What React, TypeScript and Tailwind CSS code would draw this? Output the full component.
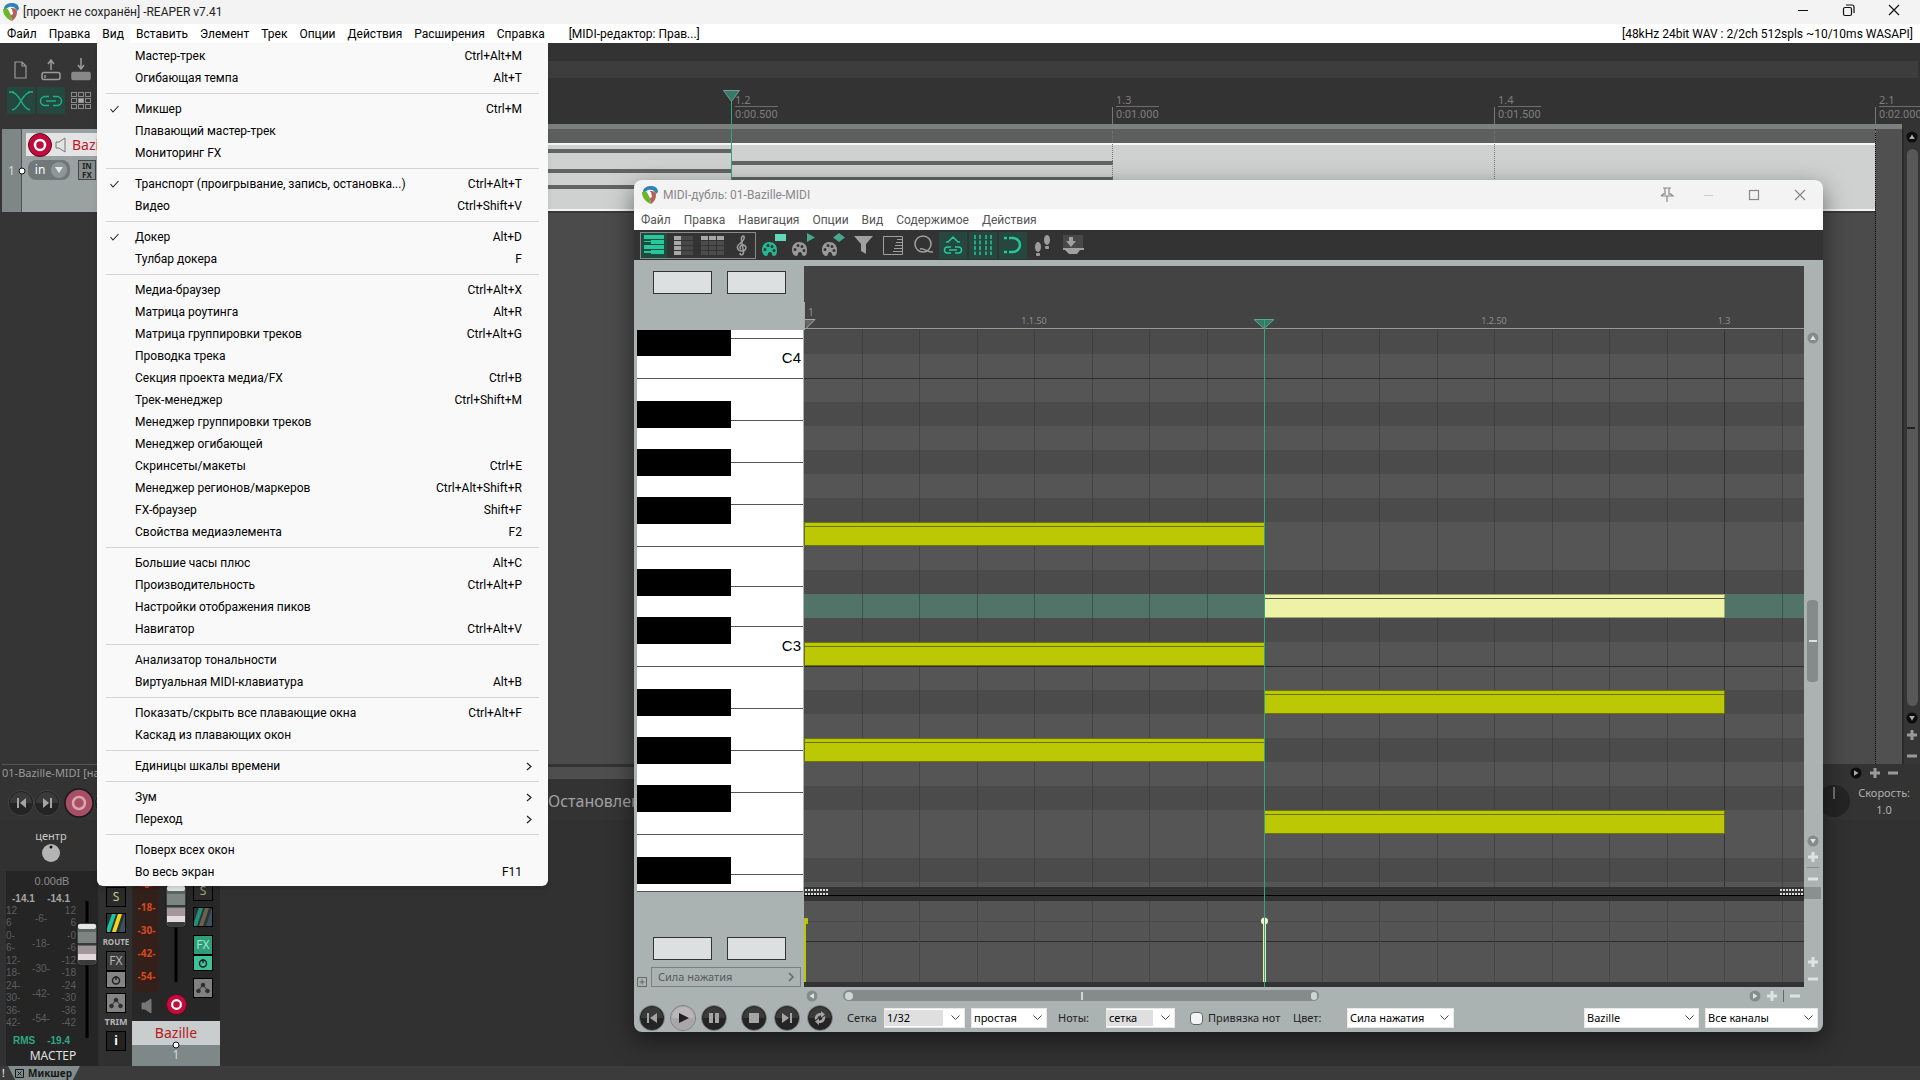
import type { ReactNode } from "react";

interface IMenuItem {
  label: string;
  keys?: string;
  checked?: boolean;
  sub?: boolean;
}

const MAIN_MENU = [
  "Файл",
  "Правка",
  "Вид",
  "Вставить",
  "Элемент",
  "Трек",
  "Опции",
  "Действия",
  "Расширения",
  "Справка"
];

const MIDI_MENU = [
  "Файл",
  "Правка",
  "Навигация",
  "Опции",
  "Вид",
  "Содержимое",
  "Действия"
];

const VIEW_MENU: IMenuItem[][] = [
  [
    { label: "Мастер-трек", keys: "Ctrl+Alt+M" },
    { label: "Огибающая темпа", keys: "Alt+T" }
  ],
  [
    { label: "Микшер", keys: "Ctrl+M", checked: true },
    { label: "Плавающий мастер-трек" },
    { label: "Мониторинг FX" }
  ],
  [
    {
      label: "Транспорт (проигрывание, запись, остановка...)",
      keys: "Ctrl+Alt+T",
      checked: true
    },
    { label: "Видео", keys: "Ctrl+Shift+V" }
  ],
  [
    { label: "Докер", keys: "Alt+D", checked: true },
    { label: "Тулбар докера", keys: "F" }
  ],
  [
    { label: "Медиа-браузер", keys: "Ctrl+Alt+X" },
    { label: "Матрица роутинга", keys: "Alt+R" },
    { label: "Матрица группировки треков", keys: "Ctrl+Alt+G" },
    { label: "Проводка трека" },
    { label: "Секция проекта медиа/FX", keys: "Ctrl+B" },
    { label: "Трек-менеджер", keys: "Ctrl+Shift+M" },
    { label: "Менеджер группировки треков" },
    { label: "Менеджер огибающей" },
    { label: "Скринсеты/макеты", keys: "Ctrl+E" },
    { label: "Менеджер регионов/маркеров", keys: "Ctrl+Alt+Shift+R" },
    { label: "FX-браузер", keys: "Shift+F" },
    { label: "Свойства медиаэлемента", keys: "F2" }
  ],
  [
    { label: "Большие часы плюс", keys: "Alt+C" },
    { label: "Производительность", keys: "Ctrl+Alt+P" },
    { label: "Настройки отображения пиков" },
    { label: "Навигатор", keys: "Ctrl+Alt+V" }
  ],
  [
    { label: "Анализатор тональности" },
    { label: "Виртуальная MIDI-клавиатура", keys: "Alt+B" }
  ],
  [
    { label: "Показать/скрыть все плавающие окна", keys: "Ctrl+Alt+F" },
    { label: "Каскад из плавающих окон" }
  ],
  [{ label: "Единицы шкалы времени", sub: true }],
  [
    { label: "Зум", sub: true },
    { label: "Переход", sub: true }
  ],
  [{ label: "Поверх всех окон" }, { label: "Во весь экран", keys: "F11" }]
];

const Logo = () => (
  <svg width="16" height="18" viewBox="0 0 16 18">
    <path d="M1 5C2 1 6 0 9 0c4 0 7 2 7 6l-2 2C13 4 9 3 6 4L1 7z" fill="#2f83b8" />
    <path d="M0 6l6-1 3 13C4 16 0 12 0 6z" fill="#6db52d" />
    <path d="M8 5c4 0 6 1 6 4 0 4-2 7-5 9L7 9z" fill="#b4605c" />
    <path d="M4 5l5 1 1 5-2 1-2-4z" fill="#fff" />
  </svg>
);

/* ---------- view menu ---------- */

const ViewMenu = () => (
  <div
    role="menu"
    className="absolute left-[97px] top-[43px] z-20 w-[451px] rounded-b-md bg-[#f9f9f9] px-[9px] pb-[3px] pt-0.5 font-['Roboto',sans-serif] text-[12px] text-black shadow-md"
  >
    {VIEW_MENU.map((group, i) => (
      <div key={i}>
        {i > 0 && <div className="my-1 h-px bg-[#d4d4d4]" />}
        {group.map((item) => (
          <button
            key={item.label}
            role="menuitem"
            className="flex h-[22px] w-full items-center whitespace-nowrap text-left"
          >
            <span className="flex w-[29px] shrink-0 pl-1">
              {item.checked && (
                <svg width="9" height="8" fill="none" stroke="#222" strokeWidth="1.1">
                  <path d="M.5 4l2.500 3L8.500 1" />
                </svg>
              )}
            </span>
            <span className="grow">{item.label}</span>
            <span>{item.keys}</span>
            <span className="flex w-[17px] shrink-0 pl-1">
              {item.sub && (
                <svg width="6" height="9" fill="none" stroke="#222" strokeWidth="1.2">
                  <path d="M1 1l4 3.500-4 3.500" />
                </svg>
              )}
            </span>
          </button>
        ))}
      </div>
    ))}
  </div>
);

/* ---------- small shared parts ---------- */

const RoundArrow = ({ dir, light }: { dir: number; light?: boolean }) => (
  <svg width="12" height="12" viewBox="0 0 12 12" className="shrink-0">
    <circle cx="6" cy="6" r="5.500" fill={light ? "#848b8b" : "#0d0d0d"} />
    <path
      d="M6 3.500L8.800 8H3.200z"
      fill={light ? "#dfe4e4" : "#aaa"}
      transform={`rotate(${dir} 6 6)`}
    />
  </svg>
);

const Plus = ({ light }: { light?: boolean }) => (
  <svg width="10" height="10" className="shrink-0" fill={light ? "#dde2e2" : "#9a9a9a"}>
    <path d="M3.500 0h3v3.500H10v3H6.500V10h-3V6.500H0v-3h3.500z" />
  </svg>
);

const Minus = ({ light }: { light?: boolean }) => (
  <svg width="10" height="4" className="shrink-0" fill={light ? "#dde2e2" : "#9a9a9a"}>
    <path d="M0 .5h10v3H0z" />
  </svg>
);

const RecordDot = ({ size }: { size: number }) => (
  <svg width={size} height={size} viewBox="0 0 24 24" className="shrink-0">
    <circle cx="12" cy="12" r="11.500" fill="#c40c3c" stroke="#5b0a20" />
    <circle cx="12" cy="12" r="5" fill="none" stroke="#fff" strokeWidth="2.500" />
  </svg>
);

const Speaker = ({ filled }: { filled?: boolean }) => (
  <svg
    width="12"
    height="16"
    viewBox="0 0 12 16"
    className="shrink-0"
    fill={filled ? "#777" : "none"}
    stroke="#777"
  >
    <path d="M1 5h3l6-4v14l-6-4H1z" />
  </svg>
);

/* ---------- arrange view ---------- */

const ToolCell = ({ active, children }: { active?: boolean; children: ReactNode }) => (
  <button
    className={`flex h-[27px] w-7 items-center justify-center ${active ? "bg-[#25483e]" : ""}`}
  >
    {children}
  </button>
);

const TrackPanel = () => (
  <div className="flex w-[548px] shrink-0 flex-col bg-[#353535]">
    <div className="grid grid-cols-[28px_28px_28px] gap-x-0.5 gap-y-1 pb-[15px] pl-[7px] pt-[13px]">
      <ToolCell>
        <svg width="14" height="18" fill="none" stroke="#9a9a9a" strokeWidth="1.2">
          <path d="M1 1h7l4 4v12H1zM8 1v4h4" />
        </svg>
      </ToolCell>
      <ToolCell>
        <svg width="20" height="23" fill="none" stroke="#9a9a9a" strokeWidth="1.500">
          <path d="M10 12V2M7 6l3-4 3 4" />
          <rect x="1" y="14.500" width="18" height="7" rx="2" />
          <path d="M4 17v3" />
        </svg>
      </ToolCell>
      <ToolCell>
        <svg width="20" height="23" fill="none" stroke="#9a9a9a" strokeWidth="1.500">
          <path d="M10 0v10M7 7l3 4 3-4" />
          <rect x="1" y="14.500" width="18" height="7" rx="1" fill="#888" stroke="#888" />
        </svg>
      </ToolCell>
      <ToolCell active>
        <svg width="24" height="20" fill="none" stroke="#1fae88" strokeWidth="1.500">
          <path d="M0 1h5M19 1h5M3 1C12 3 12 17 21 19M21 1C12 3 12 17 3 19" />
        </svg>
      </ToolCell>
      <ToolCell active>
        <svg width="24" height="12" fill="none" stroke="#1fae88" strokeWidth="1.500">
          <path d="M10 1.500H6a4.500 4.500 0 000 9h4M14 10.500h4a4.500 4.500 0 000-9h-4M7 6h10" />
        </svg>
      </ToolCell>
      <ToolCell>
        <svg width="20" height="18" fill="none" stroke="#8a8a8a">
          {[0, 7, 14].map((x) =>
            [0, 6, 12].map((y) => (
              <rect
                key={`${x}-${y}`}
                x={x + 0.5}
                y={y + 0.5}
                width="5"
                height="4"
                fill={x === 7 && y === 6 ? "#aaa" : "none"}
              />
            ))
          )}
        </svg>
      </ToolCell>
    </div>
    <div className="ml-0.5 flex h-[83px] bg-[#9aa1a1] text-white">
      <div className="flex w-5 flex-col items-center justify-center border-r border-[#4d5353] bg-[#7f8686] text-[12px] text-[#d8dcdc]">
        <span>1</span>
      </div>
      <svg width="8" height="8" className="-ml-1 self-center">
        <circle cx="4" cy="4" r="3" fill="#fff" stroke="#111" />
      </svg>
      <div className="flex grow flex-col pt-1">
        <div className="flex h-[23px] items-center gap-[3px] bg-[#e3e5e5] pl-0.5">
          <RecordDot size={24} />
          <Speaker />
          <span className="w-7 overflow-hidden pl-0.5 text-[14px] text-[#c01828]">Bazi</span>
        </div>
        <div className="flex items-center gap-2 pl-0.5 pt-1">
          <button className="flex h-5 w-[42px] items-center justify-around rounded-lg bg-[#70787a] pl-1 text-[12px]">
            in
            <svg width="16" height="16">
              <circle cx="8" cy="8" r="8" fill="#8f9696" />
              <path d="M4 5h8l-4 6z" fill="#e8e8e8" />
            </svg>
          </button>
          <button className="w-[18px] border border-[#444] bg-[#868d8d] text-[8px] font-bold leading-[9px] text-[#222]">
            IN
            <br />
            FX
          </button>
        </div>
      </div>
    </div>
  </div>
);

const RULER_MARKS = [
  { x: 564, bar: "1.3", time: "0:01.000" },
  { x: 946, bar: "1.4", time: "0:01.500" },
  { x: 1327, bar: "2.1", time: "0:02.000" }
];

/* time ruler, item and its note preview */
const Arrange = () => (
  <div className="relative z-10 flex min-w-0 grow flex-col">
    <div className="-mr-4 mt-[18px] h-[17px] bg-[#3d3d3d]" />
    <div className="mt-[46px] h-[5px] bg-[#7d807f]" />
    <div className="flex grow overflow-hidden">
      <div className="w-[1327px] shrink-0 bg-[#4b4b4b]">
        <div className="h-3.5 bg-[#5d5f5f]" />
        <svg width="1327" height="68" className="block">
          <rect width="1327" height="68" fill="#ced1d0" />
          <path d="M0 1h1327M0 67h1327" stroke="#f4f4f4" strokeWidth="2" />
          <path d="M0 8h183M0 28h183M0 44h183M183 20h382M183 36h382" stroke="#626464" strokeWidth="4" />
        </svg>
        <div className="h-0.5 bg-[#3a3a3a]" />
      </div>
      <div className="grow border-l border-dotted border-black bg-[#505050]" />
    </div>
    {RULER_MARKS.map((m) => (
      <div
        key={m.bar}
        className="absolute top-[50px] h-[110px]"
        style={{ left: m.x }}
      >
        <div className="absolute top-3.5 h-[17px] w-px bg-[#777]" />
        <div className="absolute top-[38px] h-[70px] border-l border-dotted border-[#777]" />
        <div className="pl-1 text-[11px] leading-[14px] text-[#7e7e7e]">
          <div className="h-3.5 border-b border-[#6e6e6e]">{m.bar}</div>
          <div className="pt-px font-['Roboto',sans-serif]">{m.time}</div>
        </div>
      </div>
    ))}
    <div className="absolute left-[183px] top-[50px] h-[110px] border-l border-[#2fa584]">
      <svg width="17" height="12" className="absolute -left-[9px] -top-[3px]">
        <path d="M.5.500h16l-8 11z" fill="#337a68" stroke="#8aa" strokeWidth=".8" />
      </svg>
      <div className="pl-[3px] text-[11px] leading-[14px] text-[#7e7e7e]">
        <div className="h-3.5 border-b border-[#6e6e6e]">1.2</div>
        <div className="pt-px font-['Roboto',sans-serif]">0:00.500</div>
      </div>
    </div>
  </div>
);

const ArrangeScroll = () => (
  <div className="mt-[86px] flex w-[18px] shrink-0 flex-col items-center border-l-2 border-[#2a2a2a] bg-[#353535] pb-1.5 pt-0.5">
    <RoundArrow dir={0} />
    <div className="my-1.5 flex w-[11px] grow items-center rounded-full bg-[#585858]">
      <div className="h-0.5 w-2 bg-[#222]" />
    </div>
    <RoundArrow dir={180} />
    <div className="h-1.5 shrink-0" />
    <Plus />
    <div className="h-3.5 shrink-0" />
    <Minus />
  </div>
);

/* ---------- transport and mixer ---------- */

const Transport = () => (
  <div className="flex h-14 shrink-0 bg-[#333]">
    <div className="flex w-[548px] shrink-0 flex-col pl-0.5">
      <div className="h-[17px] border-t border-[#555] text-[11px] leading-[16px] text-[#999]">
        01-Bazille-MIDI [нач
      </div>
      <div className="flex items-center pl-1.5 pt-[7px]">
        <RoundButton dark>
          <path d="M8 7h2v10H8zM17 7v10l-6-5z" />
        </RoundButton>
        <RoundButton dark>
          <path d="M15 7h2v10h-2zM8 7v10l6-5z" />
        </RoundButton>
        <svg width="30" height="30" className="ml-1">
          <circle cx="15" cy="15" r="14" fill="#a84f65" stroke="#1a1a1a" strokeWidth="1.500" />
          <circle cx="15" cy="15" r="6" fill="none" stroke="#d9a5b0" strokeWidth="2.500" />
        </svg>
        <RoundButton dark>
          <path d="M8 7l9 5-9 5z" />
        </RoundButton>
      </div>
    </div>
    <div className="flex grow flex-col pt-px">
      <div className="flex h-4 shrink-0 items-center justify-end pr-[22px]">
        <div className="mr-20 h-3 grow bg-[#4e4e4e]" />
        <div className="flex items-center gap-2">
          <RoundArrow dir={90} />
          <Plus />
          <Minus />
        </div>
      </div>
      <div className="flex grow items-center justify-between">
        <span className="text-[16px] text-[#a2a2a2]">Остановлено.</span>
        <div className="flex items-center gap-2 pr-2.5">
          <svg width="32" height="32">
            <circle cx="16" cy="16" r="16" fill="#242424" />
            <path d="M16 2v12" stroke="#bbb" />
          </svg>
          <div className="text-center text-[11px] leading-[17px] text-[#b0b0b0]">
            Скорость:
            <br />
            1.0
          </div>
        </div>
      </div>
    </div>
  </div>
);

const RoundButton = ({
  children,
  dark,
  bright
}: {
  children: ReactNode;
  dark?: boolean;
  bright?: boolean;
}) => (
  <button className={`rounded-full border ${dark ? "border-[#444]" : "border-[#777d7d]"}`}>
    <svg width="24" height="24" fill={bright ? "#222" : "#a4a4a4"}>
      <circle cx="12" cy="12" r="12" fill={bright ? "#aaa5a8" : "#242424"} />
      <path d="M1 12a11 11 0 0122 0z" fill={bright ? "#bbb6b9" : "#3a3a3a"} />
      {children}
    </svg>
  </button>
);

const Fader = ({ height, cap }: { height: number; cap: number }) => (
  <svg width="22" height={height} className="shrink-0">
    <path d={`M11 0V${height}`} stroke="#000" strokeWidth="3" />
    <rect x="1" y={cap} width="20" height="42" rx="3" fill="#5f6765" stroke="#1b1b1b" />
    <rect x="2" y={cap + 1} width="18" height="5" rx="2" fill="#e4e6e6" />
    <rect x="2" y={cap + 9} width="18" height="11" fill="#7d8583" />
    <path d={`M1 ${cap + 21}h20`} stroke="#111" />
    <rect x="2" y={cap + 23} width="18" height="8" fill="#a3979c" />
    <rect x="2" y={cap + 31} width="18" height="6" fill="#e2dadd" />
    <rect x="2" y={cap + 37} width="18" height="4" rx="2" fill="#3a3a3a" />
  </svg>
);

const MixButton = ({ cls, children }: { cls: string; children: ReactNode }) => (
  <button
    className={`flex w-5 shrink-0 items-center justify-center border border-black text-[12px] leading-none ${cls}`}
  >
    {children}
  </button>
);

const RouteIcon = ({ dim }: { dim?: boolean }) => (
  <svg width="18" height="18">
    <rect width="18" height="18" fill="#2c3438" />
    <path d="M0 14L5 0h4L3 18H0z" fill={dim ? "#1e9278" : "#18c5a0"} />
    <path d="M5 18l6-18h4L9 18z" fill={dim ? "#6b6248" : "#f4d51c"} />
    <path d="M12 18l6-18v18z" fill="#3c5260" />
  </svg>
);

const EnvIcon = () => (
  <svg width="14" height="12" fill="#2e2e2e" stroke="#2e2e2e">
    <path d="M2 9l5-6 5 6" fill="none" />
    <circle cx="2.500" cy="9" r="1.800" />
    <circle cx="7" cy="3" r="1.800" />
    <circle cx="11.500" cy="9" r="1.800" />
  </svg>
);

const PowerIcon = () => (
  <svg width="10" height="10" fill="none" stroke="#222" strokeWidth="1.500">
    <circle cx="5" cy="5.500" r="3.500" />
    <path d="M5 1v4" />
  </svg>
);

const DbColumn = ({ marks, cls }: { marks: string[]; cls: string }) => (
  <div className={`flex flex-col justify-between text-[10px] leading-3 ${cls}`}>
    {marks.map((m, i) => (
      <span key={i}>{m}</span>
    ))}
  </div>
);

const LEFT_DB = ["12", "6", "0-", "6-", "12-", "18-", "24-", "30-", "36-", "42-"];
const RIGHT_DB = ["12", "6", "-0", "-6", "-12", "-18", "-24", "-30", "-36", "-42"];

const Master = () => (
  <div className="flex w-[98px] shrink-0 flex-col pt-2">
    <div className="flex h-[43px] flex-col items-center pl-1">
      <span className="text-[11px] leading-4 text-[#c8c8c8]">центр</span>
      <svg width="18" height="18">
        <circle cx="9" cy="9" r="9" fill="#b4b4b4" />
        <circle cx="9" cy="3" r="1.500" fill="#111" />
      </svg>
    </div>
    <div className="ml-1.5 flex grow flex-col bg-[#252525] pt-0.5 font-['Liberation_Sans',sans-serif]">
      <div className="text-center text-[11px] leading-4 text-[#8c8c8c]">0.00dB</div>
      <div className="flex">
        <div className="w-[71px] pt-1">
          <div className="flex justify-between pl-1.5 pr-1.5 text-[10px] font-bold leading-3 text-[#a5a5a5]">
            <span>-14.1</span>
            <span>-14.1</span>
          </div>
          <div className="flex h-[124px] justify-between text-[#5e5e5e]">
            <DbColumn marks={LEFT_DB} cls="items-start" />
            <DbColumn
              marks={["-6-", "-18-", "-30-", "-42-", "-54-"]}
              cls="items-center pb-1 pt-2"
            />
            <DbColumn marks={RIGHT_DB} cls="items-end" />
          </div>
          <div className="flex justify-between pl-[7px] pr-1.5 pt-1.5 text-[10px] font-bold leading-3 text-[#2fa584]">
            <span>RMS</span>
            <span>-19.4</span>
          </div>
        </div>
        <div className="pt-3">
          <Fader height={137} cap={22} />
        </div>
      </div>
      <div className="pl-0.5 text-center font-['Noto_Sans',sans-serif] text-[12px] leading-[18px] text-[#e0e0e0]">
        МАСТЕР
      </div>
    </div>
  </div>
);

const MasterButtons = () => (
  <div className="flex w-[34px] shrink-0 flex-col items-center bg-[#303030] pl-0.5 pt-[67px] text-[#b5b5b5]">
    <MixButton cls="h-5 bg-[#2b2b2b] text-[#c3d08a]">S</MixButton>
    <div className="h-1.5 shrink-0" />
    <MixButton cls="h-5">
      <RouteIcon />
    </MixButton>
    <span className="h-[18px] text-[8px] font-bold leading-[17px]">ROUTE</span>
    <MixButton cls="h-5 bg-[#3c3c3c]">FX</MixButton>
    <MixButton cls="h-[17px] bg-[#858585]">
      <PowerIcon />
    </MixButton>
    <div className="h-[5px] shrink-0" />
    <MixButton cls="h-5 bg-[#858585]">
      <EnvIcon />
    </MixButton>
    <span className="h-[18px] text-[9px] font-bold leading-[17px]">TRIM</span>
    <MixButton cls="h-5 bg-[#222] font-bold text-white">i</MixButton>
  </div>
);

const TrackStrip = () => (
  <div className="flex w-[88px] shrink-0 flex-col">
    <div className="flex h-[201px] bg-[#272727] pl-0.5">
      <div className="flex w-[25px] flex-col items-center">
        <div className="flex h-[172px] w-full flex-col bg-[#33201a] pt-[58px]">
          <DbColumn
            marks={["-6-", "-18-", "-30-", "-42-", "-54-"]}
            cls="h-[104px] items-center font-bold text-[#d84a1c]"
          />
        </div>
        <div className="pt-1.5">
          <Speaker filled />
        </div>
      </div>
      <div className="flex grow flex-col items-center">
        <Fader height={162} cap={65} />
        <div className="pt-3">
          <RecordDot size={21} />
        </div>
      </div>
      <div className="flex w-[27px] flex-col pt-[61px]">
        <MixButton cls="h-5 bg-[#2b2b2b] text-[#a0a87a]">S</MixButton>
        <div className="h-1.5" />
        <MixButton cls="h-5">
          <RouteIcon dim />
        </MixButton>
        <div className="h-2" />
        <MixButton cls="h-5 border-[#24705a] bg-[#2f9c7a] text-[#9fe5cd]">FX</MixButton>
        <MixButton cls="h-4 border-[#24705a] bg-[#3dc39b]">
          <PowerIcon />
        </MixButton>
        <div className="h-[7px]" />
        <MixButton cls="h-5 bg-[#808080]">
          <EnvIcon />
        </MixButton>
      </div>
    </div>
    <div className="h-6 bg-[#c9cdcd] text-center text-[14px] leading-6 text-[#b51820]">
      Bazille
    </div>
    <div className="relative grow bg-[#7e8888] pt-1 text-center text-[12px] leading-3 text-[#d5d9d9]">
      <svg width="8" height="8" className="absolute -top-1 left-10">
        <circle cx="4" cy="4" r="3" fill="#fff" stroke="#111" />
      </svg>
      1
    </div>
  </div>
);

/* ---------- MIDI editor ---------- */

const ROW = 24;
const BEAT = 460;
const BLACK_ROWS = [0, 3, 5, 7, 10, 12, 15, 17, 19, 22];
const NOTES = [
  { row: 8, start: 0 },
  { row: 13, start: 0 },
  { row: 17, start: 0 },
  { row: 11, start: 1, selected: true },
  { row: 15, start: 1 },
  { row: 20, start: 1 }
];

const Keyboard = () => (
  <svg width="166" height="562" className="block">
    <rect width="166" height="562" fill="#fff" />
    <path
      d="M0 48.500h166M0 216.500h166M0 336.500h166M0 504.500h166M0 561.500h166M94 8.500h72M94 90.500h72M94 132.500h72M94 174.500h72M94 256.500h72M94 296.500h72M94 378.500h72M94 420.500h72M94 462.500h72M94 544.500h72"
      stroke="#555"
    />
    {BLACK_ROWS.map((r) => (
      <rect key={r} y={r * ROW - (r ? 1 : 0)} width="94" height={r ? 27 : 26} />
    ))}
    <g fontFamily="Liberation Sans, sans-serif" fontSize="15" textAnchor="end">
      <text x="164" y="33">C4</text>
      <text x="164" y="321">C3</text>
    </g>
  </svg>
);

const PianoRoll = () => (
  <svg width="100%" height="557" className="block">
    <rect width="100%" height="557" fill="#555" />
    {BLACK_ROWS.map((r) => (
      <rect key={r} y={r * ROW} width="100%" height={ROW} fill="#4b4b4b" />
    ))}
    <rect y={11 * ROW} width="100%" height={ROW} fill="#517368" />
    {Array.from({ length: 17 }, (_, i) => (
      <rect
        key={i}
        x={Math.round(((i + 1) * BEAT) / 8)}
        width="1"
        height="557"
        fill={i === 15 ? "#2c2c2c" : "#333"}
        opacity={i === 15 ? 0.8 : 0.5}
      />
    ))}
    <rect y="48" width="100%" height="1" fill="#2c2c2c" />
    <rect y="336" width="100%" height="1" fill="#2c2c2c" />
    {NOTES.map((n) => (
      <g key={n.row} transform={`translate(${n.start * BEAT} ${n.row * ROW})`}>
        <rect
          x=".5"
          y=".5"
          width={BEAT}
          height={ROW - 1}
          fill={n.selected ? "#edf2a6" : "#bcc804"}
          stroke={n.selected ? "#a3a868" : "#6b7210"}
        />
        <path d={`M1 4.500h${BEAT}`} stroke={n.selected ? "#565a3a" : "#6b7210"} />
      </g>
    ))}
  </svg>
);

const Lane = () => (
  <svg width="100%" height="81" className="block">
    <rect width="100%" height="81" fill="#545454" />
    <rect y="20" width="100%" height="1" fill="#4a4a4a" />
    <rect y="40" width="100%" height="1" fill="#2c2c2c" />
    {Array.from({ length: 17 }, (_, i) => (
      <rect key={i} x={Math.round(((i + 1) * BEAT) / 8)} width="1" height="81" fill="#464646" />
    ))}
    <rect y="17" width="4" height="6" rx="1" fill="#bcc804" />
    <rect y="20" width="2" height="61" fill="#bcc804" />
    <rect x="459" y="18" width="3" height="63" fill="#dff0a8" />
    <circle cx="460.500" cy="20" r="3.500" fill="#edf8d0" />
  </svg>
);

const Grip = () => (
  <svg width="23" height="6">
    <path
      d="M0 1h23M0 5h23"
      stroke="#ddd"
      strokeWidth="2"
      strokeDasharray="2 1"
    />
  </svg>
);

const Palette = ({ color, badge }: { color: string; badge: ReactNode }) => (
  <svg width="24" height="24">
    <path
      fillRule="evenodd"
      fill={color}
      d="M7 9c5 0 8 3 8 8 0 4-1 6-3 6-3 0-1-4-4-4s-1 4-4 4c-2 0-4-3-4-6 0-5 3-8 7-8zM6 11a1.500 1.500 0 100 3 1.500 1.500 0 000-3zm4 1a1.500 1.500 0 100 3 1.500 1.500 0 000-3zm-7 3a1.500 1.500 0 100 3 1.500 1.500 0 000-3zm9 1a1.500 1.500 0 100 3 1.500 1.500 0 000-3z"
    />
    {badge}
  </svg>
);

const MidiTool = ({ active, children }: { active?: boolean; children: ReactNode }) => (
  <button
    className={`flex h-[27px] w-7 items-center justify-center ${active ? "bg-[#26473e]" : ""}`}
  >
    {children}
  </button>
);

const MidiToolbar = () => (
  <div className="flex h-[30px] items-center bg-[#333] pl-1.5">
    <div className="mr-[3px] flex h-[27px] items-center border border-[#8a8a8a]">
      <button className="flex h-[25px] w-[26px] items-center justify-center bg-[#1d4b3f]">
        <svg width="20" height="20" fill="#25c79d">
          <path d="M0 0h20v4H0zM0 6h7v1H0zM7 5h13v4H7zM0 10h20v4H0zM7 15h13v4H7zM0 16h7v2H0z" />
        </svg>
      </button>
      <button className="flex w-7 items-center justify-center">
        <svg width="24" height="19">
          <path d="M5 0h7v4H5zM5 5h7v4H5zM5 10h7v4H5zM5 15h7v4H5z" fill="#a8a8a8" />
          <path d="M12 0h12v4H12zM12 5h12v4H12zM12 10h12v4H12zM12 15h12v4H12z" fill="#484848" />
        </svg>
      </button>
      <button className="flex w-[34px] items-center justify-center">
        <svg width="23" height="19">
          <path d="M0 0h7v4H0zM8 0h7v4H8zM16 0h7v4h-7z" fill="#a8a8a8" />
          <path
            d="M0 5h7v4H0zM8 5h7v4H8zM16 5h7v4h-7zM0 10h7v4H0zM8 10h7v4H8zM16 10h7v4h-7zM0 15h7v4H0zM8 15h7v4H8zM16 15h7v4h-7z"
            fill="#4c4c4c"
          />
        </svg>
      </button>
      <button className="flex w-[26px] items-center justify-center">
        <svg width="12" height="21" fill="none" stroke="#a0a0a0" strokeWidth="1.500">
          <path d="M4 18c0 3 4 2 3.500-1L5.500 5C5 2 7 0 8 1.500 9 4 7 6 4 8.500-1 12 2 16 6 16s6-5 1-6c-3-.5-4 3-2 4" />
        </svg>
      </button>
    </div>
    <div className="flex w-[30px] justify-center">
      <Palette color="#23b892" badge={<path d="M13 1h11v7H13z" fill="#62d8b8" />} />
    </div>
    <div className="flex w-[30px] justify-center">
      <Palette color="#9a9a9a" badge={<path d="M15 0l8 4.500L15 9z" fill="#48a88c" />} />
    </div>
    <div className="flex w-[30px] justify-center">
      <Palette color="#9a9a9a" badge={<path d="M11 4.500L17 0l6 4.500L17 9z" fill="#48a88c" />} />
    </div>
    <div className="flex gap-0.5">
      <MidiTool>
        <svg width="19" height="18" fill="#a0a0a0">
          <path d="M0 0h19l-7 8v10l-5-3V8z" />
        </svg>
      </MidiTool>
      <MidiTool>
        <svg width="20" height="19" fill="none" stroke="#a0a0a0">
          <path d="M.5.500h19v18H.5zM14 3.500h5M13 6.500h6M12 9.500h7M11 12.500h8M10 15.500h9" />
        </svg>
      </MidiTool>
      <MidiTool>
        <svg width="21" height="20" fill="none" stroke="#a0a0a0" strokeWidth="1.500">
          <circle cx="10" cy="9" r="8" />
          <path d="M7 14c4-2 7 4 13 3" />
        </svg>
      </MidiTool>
      <MidiTool active>
        <svg width="20" height="20" fill="none" stroke="#25c79d" strokeWidth="1.500">
          <path d="M3 7h2l5-5 5 5h2M8 12H4.500a3 3 0 000 6H8M12 12h3.500a3 3 0 010 6H12M6 15h8" />
        </svg>
      </MidiTool>
      <MidiTool active>
        <svg width="20" height="20" stroke="#25c79d" strokeWidth="1.500" strokeDasharray="4 1.500">
          <path d="M2 0v20M7 0v20M13 0v20M18 0v20" />
        </svg>
      </MidiTool>
      <MidiTool active>
        <svg width="18" height="18" fill="none" stroke="#25c79d" strokeWidth="2.500">
          <path d="M5 2h4a6.500 6.500 0 010 14H5M0 2h3M0 16h3" />
        </svg>
      </MidiTool>
      <MidiTool>
        <svg width="18" height="21" fill="#9c9c9c">
          <ellipse cx="4" cy="12" rx="3" ry="5" />
          <rect x="2" y="18" width="4" height="3" rx="1" />
          <ellipse cx="13" cy="5" rx="3" ry="5" />
          <rect x="11" y="11" width="4" height="3" rx="1" />
        </svg>
      </MidiTool>
      <MidiTool>
        <svg width="21" height="20">
          <path d="M0 0h20v13H0z" fill="#484848" />
          <path d="M0 13h21v2h-4l-3 4H6l-4-4H0z" fill="#a0a0a0" />
          <path d="M6 2h4v4h3l-5 6-5-6h3z" fill="#a0a0a0" />
        </svg>
      </MidiTool>
    </div>
  </div>
);

const BlankBoxes = () => (
  <div className="flex gap-[15px] pl-4">
    <input aria-label="Нота" className="h-[23px] w-[59px] border border-[#333] bg-[#dde0e0]" />
    <input aria-label="Значение" className="h-[23px] w-[59px] border border-[#333] bg-[#dde0e0]" />
  </div>
);

const Combo = ({
  id,
  value,
  cls,
  editable
}: {
  id: string;
  value: string;
  cls: string;
  editable?: boolean;
}) => (
  <div className={`flex h-5 items-center border border-[#e8e8e8] bg-white pr-1 ${cls}`}>
    <select
      id={id}
      aria-label={id}
      className={`min-w-0 grow appearance-none pl-0.5 text-[11px] leading-4 text-black ${editable ? "mr-2 bg-[#dfdfdf]" : ""}`}
    >
      <option>{value}</option>
    </select>
    <svg width="9" height="6" fill="none" stroke="#444" className="shrink-0">
      <path d="M.5.500l4 4 4-4" />
    </svg>
  </div>
);

const MidiEditor = () => (
  <div className="absolute left-[634px] top-[180px] z-20 flex w-[1189px] flex-col overflow-hidden rounded-lg bg-[#abb2b2] shadow-[0_8px_24px_rgba(0,0,0,0.5)]">
    <div className="flex h-[29px] items-center bg-[#f3f3f3] pl-2 pr-[17px] font-['Roboto',sans-serif] text-[12px] text-[#888]">
      <Logo />
      <span className="grow pl-[5px]">MIDI-дубль: 01-Bazille-MIDI</span>
      <svg width="146" height="18" fill="none" stroke="#888" strokeWidth="1.200">
        <path d="M3 2h8M5 2v7M9 2v7M1 10h12l-3-2.500M1 10l3-2.500M7 10v6" />
        <path d="M44 9.500h9" stroke="#ccc" />
        <rect x="89.500" y="4.500" width="9" height="9" />
        <path d="M135 4l10 10M145 4l-10 10" />
      </svg>
    </div>
    <div className="flex h-[21px] items-center gap-px bg-white pl-px font-['Roboto',sans-serif] text-[12px] text-[#555]">
      {MIDI_MENU.map((m) => (
        <button key={m} className="px-1.5">
          {m}
        </button>
      ))}
    </div>
    <MidiToolbar />
    <div className="flex">
      <div className="w-[170px] shrink-0 pl-[3px]">
        <div className="h-[70px] pt-[11px]">
          <BlankBoxes />
        </div>
        <Keyboard />
        <div className="pt-[45px]">
          <BlankBoxes />
        </div>
        <div className="flex items-end gap-1 pt-[7px]">
          <svg width="10" height="10" fill="none" stroke="#666">
            <path d="M.5.500h9v9h-9zM5 2.500v5M2.500 5h5" />
          </svg>
          <button className="flex h-5 w-[150px] items-center justify-between border border-[#7a8080] px-1.5 text-[11px] text-[#555c5c]">
            Сила нажатия
            <svg width="6" height="10" fill="none" stroke="#666" strokeWidth="1.500">
              <path d="M1 1l4 4-4 4" />
            </svg>
          </button>
        </div>
      </div>
      <div className="relative min-w-0 grow pt-1.5">
        <svg width="100%" height="64" className="block bg-[#434343]">
          <rect y="62" width="100%" height="1" fill="#999" />
          <rect y="36" width="1" height="28" fill="#aaa" />
          <path d="M1 53.500h10l-9 9" fill="#666" stroke="#aaa" />
          <path d="M450 53.500h20l-10 9z" fill="#337a68" stroke="#5ba995" />
          <g fill="#8d8d8d" fontSize="9" textAnchor="middle">
            <text x="7" y="50" fontSize="11">1</text>
            <text x="230" y="58">1.1.50</text>
            <text x="690" y="58">1.2.50</text>
            <text x="920" y="58">1.3</text>
          </g>
        </svg>
        <PianoRoll />
        <div className="h-2 bg-[#333] px-px pt-0.5">
          <div className="flex justify-between">
            <Grip />
            <Grip />
          </div>
        </div>
        <div className="h-1.5 border-t border-black bg-[#333]" />
        <Lane />
        <div className="h-[5px] bg-[#333]" />
        <div className="absolute bottom-0 left-[460px] top-[60px] w-px bg-[#2fa584]" />
      </div>
      <div className="flex w-[19px] shrink-0 flex-col items-center pb-1.5 pr-0.5 pt-[72px]">
        <RoundArrow dir={0} light />
        <div className="h-[256px]" />
        <div className="flex h-[82px] w-[11px] items-center justify-center rounded bg-[#858b8b]">
          <div className="h-0.5 w-2 bg-[#dde2e2]" />
        </div>
        <div className="h-[153px]" />
        <RoundArrow dir={180} light />
        <div className="h-[5px]" />
        <Plus light />
        <div className="my-[5px] h-px w-3 bg-[#848b8b]" />
        <div className="h-1" />
        <Minus light />
        <div className="mt-1.5 h-3 w-full bg-[#8a9090]" />
        <div className="grow" />
        <Plus light />
        <div className="h-2.5" />
        <Minus light />
      </div>
    </div>
    <div className="flex h-[17px] items-center pl-[172px] pr-[23px]">
      <RoundArrow dir={-90} light />
      <div className="ml-[25px] flex h-[11px] w-[476px] items-center justify-between rounded-full bg-[#858b8b] px-0.5">
        <span className="h-2 w-2 rounded-full bg-[#cfd4d4]" />
        <span className="h-2 w-0.5 bg-[#cfd4d4]" />
        <span className="h-2 w-1.5 rounded-full bg-[#cfd4d4]" />
      </div>
      <div className="flex grow items-center justify-end gap-1.5">
        <RoundArrow dir={90} light />
        <Plus light />
        <div className="h-3 w-px bg-[#666]" />
        <Minus light />
      </div>
    </div>
    <div className="flex h-[28px] items-center pl-[5px] pr-[5px] text-[11px] text-[#222]">
      <div className="flex items-center gap-[5px]">
        <RoundButton>
          <path d="M7 7h2v10H7zM17 7v10l-7-5z" />
        </RoundButton>
        <RoundButton bright>
          <path d="M8 7l10 5-10 5z" />
        </RoundButton>
        <RoundButton>
          <path d="M7 7h4v10H7zM13 7h4v10h-4z" />
        </RoundButton>
        <span className="w-1" />
        <RoundButton>
          <path d="M7 7h10v10H7z" />
        </RoundButton>
        <span className="-mr-[3px]" />
        <RoundButton>
          <path d="M15 7h2v10h-2zM7 7v10l7-5z" />
        </RoundButton>
        <span className="-mr-[3px]" />
        <RoundButton>
          <path d="M7 14a5.500 5.500 0 016-7V5l4 3.500-4 3V9.500a3 3 0 00-3.500 3zM17 10a5.500 5.500 0 01-6 7v2l-4-3.500 4-3v2a3 3 0 003.500-3z" />
        </RoundButton>
      </div>
      <label htmlFor="Сетка" className="w-[51px] pl-[14px]">
        Сетка
      </label>
      <Combo id="Сетка" value="1/32" cls="w-[81px]" editable />
      <Combo id="Тип сетки" value="простая" cls="ml-1.5 w-[76px]" />
      <label htmlFor="Ноты" className="w-[59px] pl-[11px]">
        Ноты:
      </label>
      <Combo id="Ноты" value="сетка" cls="w-[69px]" editable />
      <label className="ml-[15px] flex w-[88px] items-center gap-[5px] whitespace-nowrap">
        <input
          type="checkbox"
          className="h-[13px] w-[13px] shrink-0 appearance-none rounded-sm border border-[#666] bg-[#f4f4f4]"
        />
        Привязка нот
      </label>
      <label htmlFor="Цвет" className="w-[69px] pl-[15px]">
        Цвет:
      </label>
      <Combo id="Цвет" value="Сила нажатия" cls="w-[107px]" />
      <div className="grow" />
      <Combo id="Трек" value="Bazille" cls="w-[115px]" />
      <Combo id="Каналы" value="Все каналы" cls="ml-1.5 w-[113px]" />
    </div>
  </div>
);

export default function App() {
  return (
    <div className="relative flex min-h-screen w-full flex-col overflow-hidden bg-[#333] font-['Noto_Sans',sans-serif]">
      <header className="flex h-6 shrink-0 items-center bg-[#f3f3f3] pl-[3px] pr-5 font-['Roboto',sans-serif] text-[12px] text-[#222]">
        <Logo />
        <span className="grow pl-1">[проект не сохранён] -REAPER v7.41</span>
        <svg width="102" height="16" fill="none" stroke="#111" strokeWidth="1.200">
          <path d="M0 6.500h10M91 1l10 10M101 1L91 11" />
          <rect x="45.500" y="3.500" width="8" height="8" rx="1.500" />
          <path d="M48 1h6q2 0 2 2v6" />
        </svg>
      </header>
      <nav className="flex h-[19px] shrink-0 items-center bg-white pl-px font-['Roboto',sans-serif] text-[12px] text-black">
        {MAIN_MENU.map((m) => (
          <button key={m} className={`px-1.5 ${m === "Вид" ? "bg-[#f9f9f9]" : ""}`}>
            {m}
          </button>
        ))}
        <span className="grow pl-[18px]">[MIDI-редактор: Прав...]</span>
        <span className="pr-[7px]">[48kHz 24bit WAV : 2/2ch 512spls ~10/10ms WASAPI]</span>
      </nav>
      <main className="flex h-[721px] shrink-0">
        <TrackPanel />
        <Arrange />
        <ArrangeScroll />
      </main>
      <Transport />
      <section className="flex min-h-[246px] grow bg-[#313131]">
        <Master />
        <MasterButtons />
        <TrackStrip />
      </section>
      <footer className="flex h-3.5 shrink-0 items-center bg-[#3b3b3b] text-[10px] leading-none">
        <span className="w-2 pl-0.5 text-white">!</span>
        <button className="flex h-3.5 w-[72px] items-center gap-1 bg-[#828c8c] pl-[7px] font-bold text-[#161616] [clip-path:polygon(0_0,100%_0,90%_100%,10%_100%)]">
          <svg width="9" height="9" fill="none" stroke="#161616">
            <path d="M.5.500h8v8h-8zM2.500 2.500l4 4M6.500 2.500l-4 4" />
          </svg>
          Микшер
        </button>
      </footer>
      <MidiEditor />
      <ViewMenu />
    </div>
  );
}
